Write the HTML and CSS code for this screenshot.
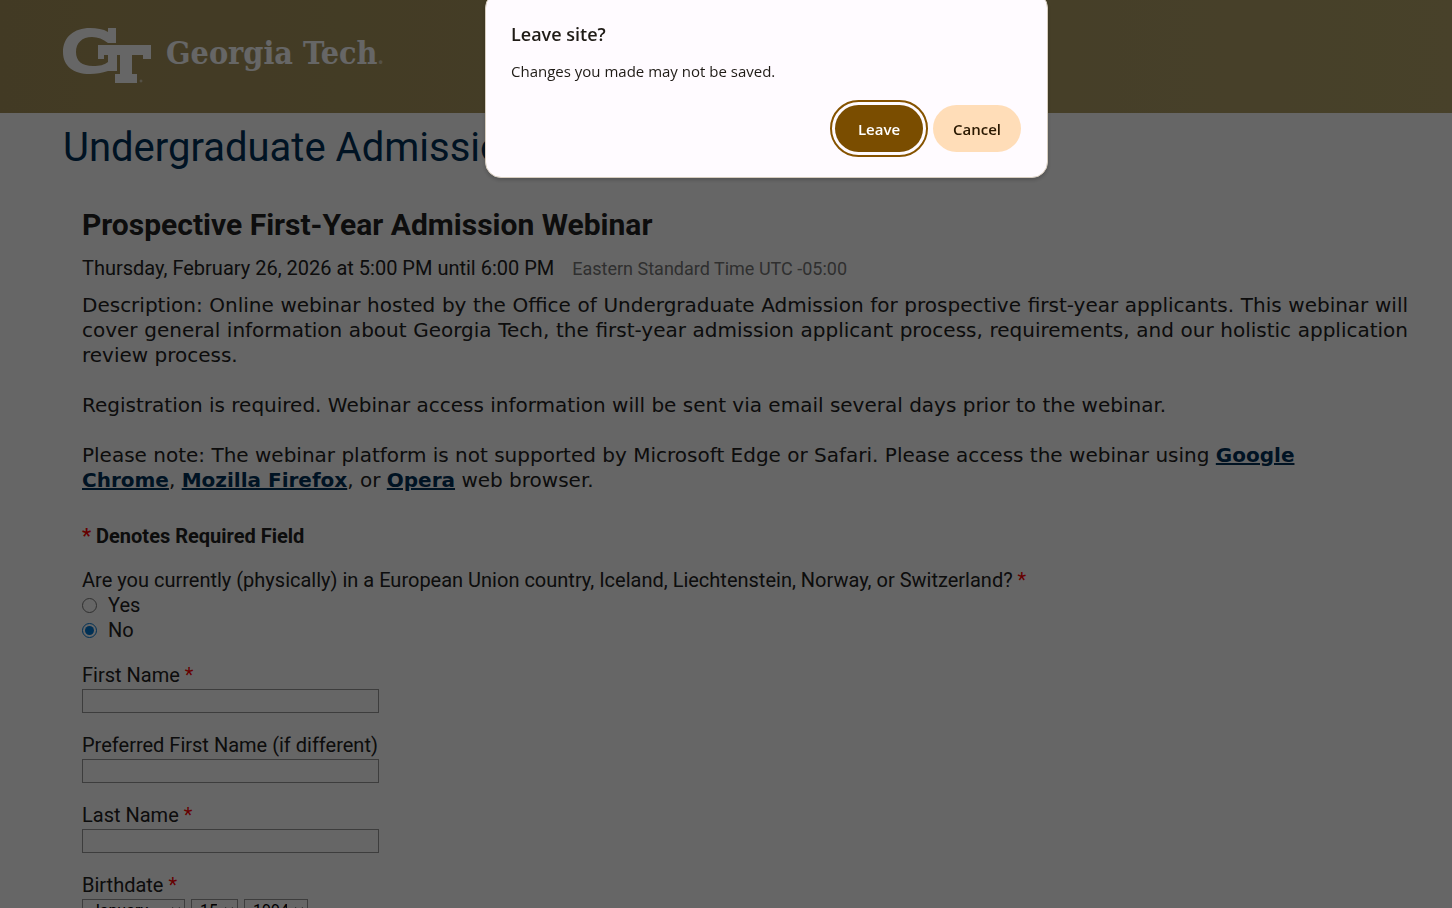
FILE: index.html
```html
<!DOCTYPE html>
<html lang="en">
<head>
<meta charset="utf-8">
<meta name="viewport" content="width=device-width, initial-scale=1">
<title>Prospective First-Year Admission Webinar</title>
<link rel="stylesheet" href="styles.css">
</head>
<body>
<header class="banner">
  <a class="brand" href="#" aria-label="Georgia Tech">
    <svg class="brand-mark" viewBox="0 0 88 56" aria-hidden="true">
      <path fill="#fff" d="M45 0H53V15H45C40 11 35 9 29 9C19 9 13 15 13 24C13 33 19 38 30 38C37 38 41 37 45 34V27H41V31H35V17H88V31H80V27H69V46H74V55H52V46H57V27H54V43H45C39 45 33 46 27 46C10 46 0 38 0 24C0 9 11 0 27 0C34 0 40 1 45 4Z"/>
      <circle cx="78" cy="53" r="1" fill="none" stroke="#fff" stroke-opacity=".6"/>
    </svg>
    <span class="brand-name">Georgia Tech<span class="brand-dot">.</span></span>
  </a>
</header>
<main class="page">
  <p class="site-title">Undergraduate Admission</p>
  <form class="event">
    <h1 class="event-title">Prospective First-Year Admission Webinar</h1>
    <p class="event-date">Thursday, February 26, 2026 at 5:00 PM until 6:00 PM <span class="event-zone">Eastern Standard Time UTC -05:00</span></p>
    <div class="description">
      <p class="justified">Description: Online webinar hosted by the Office of Undergraduate Admission for prospective first-year applicants. This webinar will cover general information about Georgia Tech, the first-year admission applicant process, requirements, and our holistic application review process.</p>
      <p>Registration is required. Webinar access information will be sent via email several days prior to the webinar.</p>
      <p>Please note: The webinar platform is not supported by Microsoft Edge or Safari. Please access the webinar using <a href="#">Google<br>Chrome</a>, <a href="#">Mozilla Firefox</a>, or <a href="#">Opera</a> web browser.</p>
    </div>
    <p class="legend"><span class="required">*</span> Denotes Required Field</p>
    <fieldset class="field question">
      <legend>Are you currently (physically) in a European Union country, Iceland, Liechtenstein, Norway, or Switzerland? <span class="required">*</span></legend>
      <label class="choice"><input type="radio" name="region"> Yes</label>
      <label class="choice"><input type="radio" name="region" checked> No</label>
    </fieldset>
    <div class="field">
      <label class="field-label" for="first">First Name <span class="required">*</span></label>
      <input class="text-box" id="first" type="text">
    </div>
    <div class="field">
      <label class="field-label" for="preferred">Preferred First Name (if different)</label>
      <input class="text-box" id="preferred" type="text">
    </div>
    <div class="field">
      <label class="field-label" for="last">Last Name <span class="required">*</span></label>
      <input class="text-box" id="last" type="text">
    </div>
    <div class="field">
      <label class="field-label" for="month">Birthdate <span class="required">*</span></label>
      <div class="date-row">
        <select class="month" id="month"><option>January</option></select>
        <select class="day" aria-label="Day"><option>15</option></select>
        <select class="year" aria-label="Year"><option>1994</option></select>
      </div>
    </div>
  </form>
</main>
<div class="scrim">
  <section class="dialog" role="alertdialog" aria-modal="true" aria-labelledby="dialog-title" aria-describedby="dialog-text">
    <h2 class="dialog-title" id="dialog-title">Leave site?</h2>
    <p class="dialog-text" id="dialog-text">Changes you made may not be saved.</p>
    <div class="dialog-actions">
      <button class="button primary" type="button">Leave</button>
      <button class="button secondary" type="button">Cancel</button>
    </div>
  </section>
</div>
</body>
</html>
```
FILE: styles.css
```css
* { box-sizing: border-box; }
body {
  margin: 0;
  height: 100vh;
  overflow: hidden;
  background: #fff;
  color: #222;
  font: 20px/25px Roboto, sans-serif;
}
p, h1, h2 { margin: 0; }

.banner {
  padding: 28px 63px 29px;
  background: linear-gradient(90deg, #a6925a, #b3a369);
}
.brand {
  display: flex;
  align-items: flex-start;
  gap: 15px;
  color: #fff;
  text-decoration: none;
}
.brand-mark { width: 88px; height: 56px; }
.brand-name {
  font: bold 32px/50px "DejaVu Serif Condensed", "DejaVu Serif", serif;
}
.brand-dot { font-size: 20px; opacity: .5; }

.page { padding: 10px 44px 40px 63px; }
.site-title { color: #003057; font-size: 40px; line-height: 50px; }
.event { padding: 32px 0 0 19px; }
.event-title { font-size: 30px; line-height: 40px; font-weight: 700; }
.event-date { margin-top: 11px; }
.event-zone { margin-left: 13px; color: #777; font-size: 18px; }

.description {
  display: grid;
  gap: 25px;
  margin-top: 12px;
  font-family: "DejaVu Sans", Verdana, sans-serif;
}
.justified { text-align: justify; }
.description a { color: #003057; font-weight: 700; }

.legend { margin-top: 31px; font-weight: 700; }
.required { color: #f00; }
.field { margin: 20px 0 0; padding: 0; border: 0; }
.question { margin-top: 19px; }
.field legend { padding: 0; }
.choice { display: flex; align-items: center; gap: 11px; }
.choice input { width: 15px; height: 15px; margin: 0; accent-color: #0078d4; }
.field-label { display: block; margin-bottom: 1px; }
.text-box {
  display: block;
  width: 297px;
  height: 24px;
  border: 1px solid #999;
  background: #fff;
  font: inherit;
}
.date-row { display: flex; gap: 6px; }
.date-row select {
  height: 23px;
  padding: 0 4px;
  border: 1px solid #999;
  background: #fff;
  font: 16px Roboto, sans-serif;
}
.month { width: 103px; }
.day { width: 47px; }
.year { width: 64px; }

.scrim {
  position: fixed;
  inset: 0;
  display: flex;
  justify-content: center;
  align-items: flex-start;
  padding-left: 81px;
  background: rgba(0, 0, 0, .6);
}
.dialog {
  width: 563px;
  margin-top: -8px;
  padding: 27px 26px 25px 25px;
  border: 1px solid #d8cec0;
  border-radius: 16px;
  background: #fffbff;
  box-shadow: 0 2px 4px rgba(0, 0, 0, .2);
  color: #1f1b16;
  font-family: "Open Sans", "Segoe UI", sans-serif;
}
.dialog-title { font-size: 18px; line-height: 28px; font-weight: 600; }
.dialog-text { margin-top: 11px; font-size: 15px; line-height: 24px; }
.dialog-actions {
  display: flex;
  justify-content: flex-end;
  gap: 10px;
  margin-top: 22px;
}
.button {
  width: 88px;
  height: 47px;
  border: 0;
  border-radius: 24px;
  font: 600 15px "Open Sans", "Segoe UI", sans-serif;
}
.primary {
  background: #7a4d00;
  color: #fff;
  outline: 2px solid #865300;
  outline-offset: 3px;
}
.secondary { background: #ffddb8; color: #2a1800; }
```
